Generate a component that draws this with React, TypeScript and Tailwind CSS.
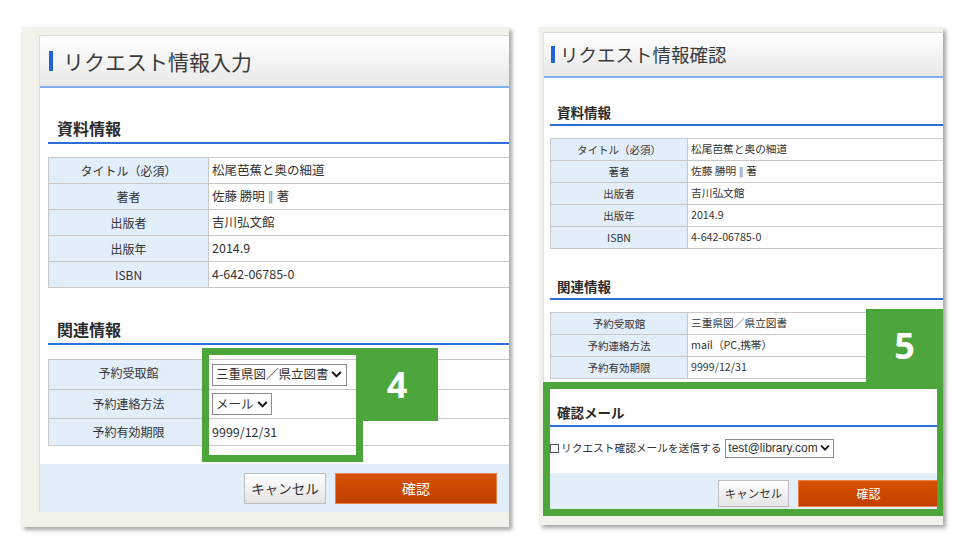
import React from "react";

const Chevron = ({ size }: { size: number }) => (
  <svg width={size} height={size} viewBox="0 0 10 10" fill="none">
    <path d="M1.6 3.2 L5 6.7 L8.4 3.2" stroke="#1a1a1a" strokeWidth="1.9" strokeLinecap="round" strokeLinejoin="round" />
  </svg>
);

const Author = () => (
  <span>
    佐藤 勝明 <span className="font-['DejaVu_Sans',sans-serif] text-[#8a8a8a]">‖</span> 著
  </span>
);

const infoRows: [string, React.ReactNode][] = [
  ["タイトル（必須）", "松尾芭蕉と奥の細道"],
  ["著者", <Author />],
  ["出版者", "吉川弘文館"],
  ["出版年", "2014.9"],
  ["ISBN", "4-642-06785-0"],
];

function LeftPanel() {
  return (
    <div className="flex-1 bg-white border-l border-t border-[#dcdcdc] flex flex-col">
      <div className="h-[52px] border-b-2 border-[#7eb0ef] bg-gradient-to-b from-white to-[#e9e9e9] flex items-center pl-[9px]">
        <div className="w-[4px] h-[20px] bg-[#1e63d8]" />
        <div className="ml-[10px] text-[21px] leading-none text-[#3a3a3a]">リクエスト情報入力</div>
      </div>
      <div className="pl-[8px] flex flex-col">
        <div className="pt-[28px] pl-[9px] pb-[2px] leading-[24px] text-[16px] font-bold text-[#2a2a2a] border-b-2 border-[#2d6fd8]">資料情報</div>
        <div className="mt-[13px] border-l border-t border-[#c8c8c8]">
          {infoRows.map(([l, v]) => (
            <div key={l} className="flex h-[26px] border-b border-[#c8c8c8]">
              <div className="w-[160px] shrink-0 border-r border-[#c8c8c8] bg-[#e3eefb] flex items-center justify-center text-[12px]">{l}</div>
              <div className="flex-1 flex items-center pl-[3px] text-[12.5px]">{v}</div>
            </div>
          ))}
        </div>
        <div className="pt-[29px] pl-[9px] pb-[2px] leading-[24px] text-[16px] font-bold text-[#2a2a2a] border-b-2 border-[#2d6fd8]">関連情報</div>
        <div className="mt-[14px] border-l border-t border-[#c8c8c8]">
          <div className="flex h-[30px] border-b border-[#c8c8c8]">
            <div className="w-[160px] shrink-0 border-r border-[#c8c8c8] bg-[#e3eefb] flex items-start pt-[4px] justify-center text-[12px]">予約受取館</div>
            <div className="flex-1 flex items-center pl-[3px]">
              <div className="w-[135px] h-[22px] border border-[#8a8a8a] flex items-center justify-between pl-[3px] pr-[4px] text-[12.5px]">
                <span>三重県図／県立図書</span>
                <Chevron size={11} />
              </div>
            </div>
          </div>
          <div className="flex h-[29px] border-b border-[#c8c8c8]">
            <div className="w-[160px] shrink-0 border-r border-[#c8c8c8] bg-[#e3eefb] flex items-center justify-center text-[12px]">予約連絡方法</div>
            <div className="flex-1 flex items-center pl-[3px]">
              <div className="w-[60px] h-[22px] border border-[#8a8a8a] flex items-center justify-between pl-[3px] pr-[3px] text-[12.5px]">
                <span>メール</span>
                <Chevron size={11} />
              </div>
            </div>
          </div>
          <div className="flex h-[27px] border-b border-[#c8c8c8]">
            <div className="w-[160px] shrink-0 border-r border-[#c8c8c8] bg-[#e3eefb] flex items-center justify-center text-[12px]">予約有効期限</div>
            <div className="flex-1 flex items-center pl-[3px] text-[12.5px]">9999/12/31</div>
          </div>
        </div>
      </div>
      <div className="mt-auto h-[48px] bg-[#e3eefb] flex items-center justify-end pr-[12px] gap-[9px]">
        <div className="w-[82px] h-[31px] border border-[#bdbdbd] bg-gradient-to-b from-white to-[#e4e4e4] flex items-center justify-center text-[13.5px] text-[#333]">キャンセル</div>
        <div className="w-[162px] h-[31px] border border-[#e8804a] bg-gradient-to-b from-[#d65200] to-[#c13e00] flex items-center justify-center text-[14px] text-white">確認</div>
      </div>
    </div>
  );
}

function RightPanel() {
  return (
    <div className="flex-1 bg-white border-l border-t border-[#dcdcdc] flex flex-col">
      <div className="h-[45px] border-b-2 border-[#7eb0ef] bg-gradient-to-b from-white to-[#e9e9e9] flex items-center pl-[7px]">
        <div className="w-[4px] h-[17px] bg-[#1e63d8]" />
        <div className="ml-[5px] text-[18.5px] leading-none text-[#3a3a3a]">リクエスト情報確認</div>
      </div>
      <div className="pl-[6px] flex flex-col">
        <div className="pt-[24px] pl-[7px] pb-[2px] leading-[20px] text-[13.5px] font-bold text-[#2a2a2a] border-b-2 border-[#2d6fd8]">資料情報</div>
        <div className="mt-[12px] border-l border-t border-[#c8c8c8]">
          {infoRows.map(([l, v]) => (
            <div key={l} className="flex h-[22px] border-b border-[#c8c8c8]">
              <div className="w-[137px] shrink-0 border-r border-[#c8c8c8] bg-[#e3eefb] flex items-center justify-center text-[10.5px]">{l}</div>
              <div className="flex-1 flex items-center pl-[3px] text-[10.7px]">{v}</div>
            </div>
          ))}
        </div>
        <div className="pt-[27px] pl-[7px] pb-[2px] leading-[20px] text-[13.5px] font-bold text-[#2a2a2a] border-b-2 border-[#2d6fd8]">関連情報</div>
        <div className="mt-[12px] border-l border-t border-[#c8c8c8]">
          {[
            ["予約受取館", "三重県図／県立図書"],
            ["予約連絡方法", "mail（PC,携帯）"],
            ["予約有効期限", "9999/12/31"],
          ].map(([l, v]) => (
            <div key={l} className="flex h-[22px] border-b border-[#c8c8c8]">
              <div className="w-[137px] shrink-0 border-r border-[#c8c8c8] bg-[#e3eefb] flex items-center justify-center text-[10.5px]">{l}</div>
              <div className="flex-1 flex items-center pl-[3px] text-[10.7px]">{v}</div>
            </div>
          ))}
        </div>
        <div className="pt-[23px] pl-[7px] pb-[3px] leading-[20px] text-[13.5px] font-bold text-[#2a2a2a] border-b-2 border-[#2d6fd8]">確認メール</div>
        <div className="mt-[12px] h-[18px] flex items-center text-[10.7px]">
          <div className="w-[9px] h-[9px] border border-[#555] bg-white" />
          <span className="ml-[2px]">リクエスト確認メールを送信する</span>
          <div className="ml-[4px] w-[109px] h-[19px] border border-[#8a8a8a] flex items-center justify-between pl-[2px] pr-[3px]">
            <span className="font-['Liberation_Sans',sans-serif] text-[12px]">test@library.com</span>
            <Chevron size={10} />
          </div>
        </div>
      </div>
      <div className="mt-[16px] flex-1 bg-[#e3eefb] flex items-start justify-end pt-[7px] pr-[4px] gap-[9px]">
        <div className="w-[71px] h-[27px] border border-[#bdbdbd] bg-gradient-to-b from-white to-[#e4e4e4] flex items-center justify-center text-[11.5px] text-[#333]">キャンセル</div>
        <div className="w-[141px] h-[27px] border border-[#e8804a] bg-gradient-to-b from-[#d65200] to-[#c13e00] flex items-center justify-center text-[12px] text-white">確認</div>
      </div>
    </div>
  );
}

export default function App() {
  return (
    <div className="relative w-[978px] h-[559px] bg-white overflow-hidden flex items-start font-['Noto_Sans_CJK_JP',sans-serif] text-[#333]">
      <div className="ml-[21px] mt-[27px] w-[488px] h-[500px] bg-[#f2f1ea] shadow-[3px_3px_4px_rgba(0,0,0,0.35)] pl-[18px] pt-[8px] pb-[15px] flex">
        <LeftPanel />
      </div>
      <div className="ml-[30px] mt-[27px] w-[404px] h-[498px] bg-[#f2f1ea] shadow-[3px_3px_4px_rgba(0,0,0,0.35)] pl-[4px] pt-[5px] pb-[9px] flex">
        <RightPanel />
      </div>

      {/* highlight 4 */}
      <div className="absolute left-[202px] top-[348px] w-[161px] h-[114px] border-[7px] border-[#4ca63b]" />
      <div className="absolute left-[356px] top-[348px] w-[82px] h-[73px] bg-[#4ca63b] flex items-center justify-center text-white text-[36px] font-bold font-['Noto_Sans',sans-serif] leading-none">4</div>

      {/* highlight 5 */}
      <div className="absolute left-[543px] top-[382px] w-[400px] h-[134px] border-t-[7px] border-b-[7px] border-l-[7px] border-r-[6px] border-[#4ca63b]" />
      <div className="absolute left-[866px] top-[309px] w-[77px] h-[73px] bg-[#4ca63b] flex items-center justify-center text-white text-[36px] font-bold font-['Noto_Sans',sans-serif] leading-none">5</div>
    </div>
  );
}
